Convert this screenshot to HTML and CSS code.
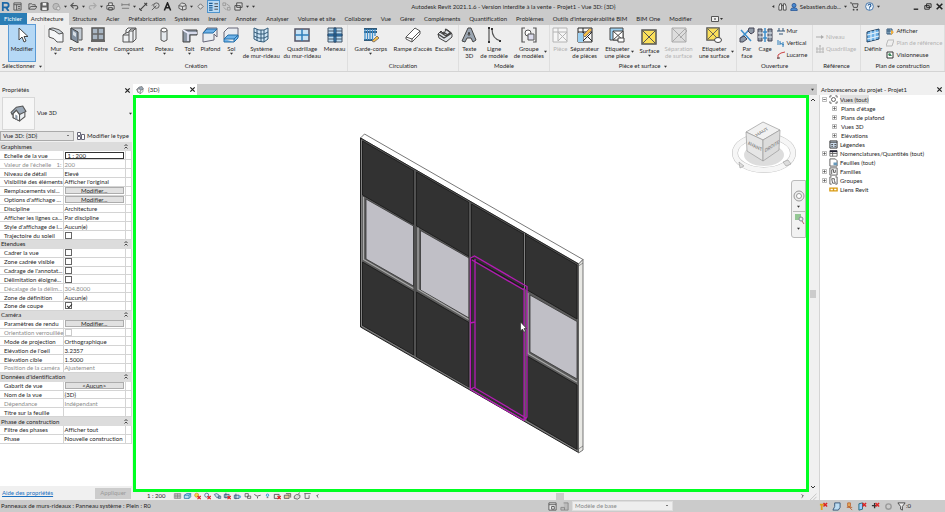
FILE: index.html
```html
<!DOCTYPE html>
<html lang="fr">
<head>
    <meta charset="UTF-8">
    <meta name="viewport" content="width=device-width, initial-scale=1.0">
    <title>Autodesk Revit 2021.1.6</title>
    <link rel="stylesheet" href="styles.css">
</head>
<body>

    <!-- Shared icons -->
    <svg class="sprite" aria-hidden="true">
        <symbol id="i-caret" viewBox="0 0 4 4"><path d="M0 1h4L2 3.5z" fill="#333"/></symbol>
        <symbol id="i-close" viewBox="0 0 8 8"><path d="M1.5 1.5l5 5M6.5 1.5l-5 5" stroke="#222" stroke-width="1.4"/></symbol>
        <symbol id="i-collapse" viewBox="0 0 6 6"><path d="M1.5 3L3 1.5 4.5 3M1.5 5.5L3 4l1.5 1.5" fill="none" stroke="#333" stroke-width=".9"/></symbol>
        <symbol id="i-cursor" viewBox="0 0 16 16"><path d="M5 1v12l3-3 2 5 2-1-2-4.500h4z" fill="#fff" stroke="#444"/></symbol>
        <symbol id="i-house" viewBox="0 0 16 16"><path d="M3 7v5l6 3 5-4V6z" fill="#eef2f6" stroke="#555"/><path d="M1 7l5-5 6-1 3 5-6 3-3-4-4 4z" fill="#9aa7b5" stroke="#555"/><path d="M6 5l3 4v6l-6-3V8z" fill="#fff" stroke="#555"/><path d="M5 9v4l2 1v-4z" fill="#8b97a5"/></symbol>
        <symbol id="i-room" viewBox="0 0 16 16"><path d="M1 1h14v14H1z" fill="#f6f6f6" stroke="currentColor"/><path d="M6 1v4H1M6 5v9M6 5h9M6 5l9 9M15 5l-9 9" fill="none" stroke="currentColor"/></symbol>
        <symbol id="i-area" viewBox="0 0 16 16"><path d="M1 1h14v14H1z" fill="#fbe05a" stroke="#555" stroke-width="1.5"/><path d="M2 2l12 12M14 2L2 14" stroke="#555"/></symbol>
        <symbol id="i-plus" viewBox="0 0 6 6"><path d="M.5.5h5v5h-5z" fill="#fff" stroke="#aaa"/><path d="M1.500 3h3M3 1.500v3" stroke="#555"/></symbol>
        <symbol id="i-minus" viewBox="0 0 6 6"><path d="M.5.5h5v5h-5z" fill="#fff" stroke="#aaa"/><path d="M1.500 3h3" stroke="#555"/></symbol>
        <symbol id="i-redx" viewBox="0 0 10 10"><path d="M5 5l4 4M9 5l-4 4" stroke="#d22" stroke-width="1.5"/></symbol>
    </svg>

    <div class="app">

        <!-- Title bar -->
        <header class="title-bar">
            <div class="quick-access">
                <button class="qa" aria-label="Revit"><svg viewBox="0 0 10 10"><path d="M2 10V1h4a2.500 2.500 0 0 1 0 5H3M5.500 6L8.500 10" fill="none" stroke="#1c68a8" stroke-width="2"/></svg></button>
                <button class="qa" aria-label="Accueil"><svg viewBox="0 0 10 10"><path d="M1 1h8v8H1zM1 3h8M4 3v6M5.500 5H8M5.500 7H8" fill="none" stroke="#555"/></svg></button>
                <button class="qa qa-group" aria-label="Ouvrir"><svg viewBox="0 0 10 10"><path d="M1 8V2h3l1 1h3v2M1 8l2-3h7L8 8z" fill="none" stroke="#555"/></svg></button>
                <button class="qa" aria-label="Enregistrer"><svg viewBox="0 0 10 10"><path d="M1 1h8v8H1z" fill="#666" stroke="#444"/><path d="M3 1h4v3H3zM2.500 6h5v3h-5z" fill="#eee"/></svg></button>
                <button class="qa" aria-label="Synchroniser"><svg viewBox="0 0 10 10"><circle cx="4.500" cy="5" r="3.500" fill="#bbb" stroke="#999"/><circle cx="7" cy="7" r="2" fill="#ddd" stroke="#999"/></svg></button>
                <svg class="caret"><use href="#i-caret"/></svg>
                <button class="qa" aria-label="Annuler"><svg viewBox="0 0 10 10"><path d="M4 1L1 4l3 3M1 4h5a2 2 0 0 1 1 4H6" fill="none" stroke="#555" stroke-width="1.300"/></svg></button>
                <svg class="caret"><use href="#i-caret"/></svg>
                <button class="qa" aria-label="Rétablir"><svg viewBox="0 0 10 10"><path d="M6 1l3 3-3 3M9 4H4a2 2 0 0 0-1 4h1" fill="none" stroke="#aaa" stroke-width="1.300"/></svg></button>
                <svg class="caret"><use href="#i-caret"/></svg>
                <button class="qa" aria-label="Imprimer"><svg viewBox="0 0 10 10"><path d="M1 4h8v4H1zM3 4V1h4v3M3 6h4v3H3z" fill="#eee" stroke="#444"/></svg></button>
                <button class="qa qa-group" aria-label="Mesurer"><svg viewBox="0 0 10 10"><path d="M1 3h8M1 7h8M1 1.500v3M9 1.500v3" stroke="#777" fill="none"/></svg></button>
                <svg class="caret"><use href="#i-caret"/></svg>
                <button class="qa" aria-label="Cote"><svg viewBox="0 0 10 10"><path d="M1 9l8-8M0 7l3 3M6 1l3 3" stroke="#444" stroke-width="1.300"/></svg></button>
                <button class="qa" aria-label="Étiquette"><svg viewBox="0 0 10 10"><circle cx="6" cy="4" r="3" fill="none" stroke="#555"/><path d="M1 9l5-5M1 4l2-2" stroke="#555"/></svg></button>
                <button class="qa" aria-label="Texte"><svg viewBox="0 0 10 10"><path d="M1.500 9.500L5 1l3.500 8.500M3 6.500h4" fill="none" stroke="#222" stroke-width="1.700"/></svg></button>
                <button class="qa qa-group" aria-label="Vue 3D"><svg viewBox="0 0 10 10"><path d="M1 4l3-3 4 1 1 2v4l-4 1-4-2zM1 4l4 1 4-1M5 5v4" fill="#ddd" stroke="#555"/></svg></button>
                <svg class="caret"><use href="#i-caret"/></svg>
                <button class="qa" aria-label="Coupe"><svg viewBox="0 0 10 10"><path d="M2 5l3-3 3 3-3 3z" fill="#ddd" stroke="#666"/></svg></button>
                <button class="qa qa-on" aria-label="Lignes fines"><svg viewBox="0 0 10 10"><path d="M0 1.500h4M0 4h4M0 6.500h4M0 9h4" stroke="#1c5d95" stroke-width="1.500"/><path d="M6 2h4M6 5h4M6 8h4" stroke="#444"/></svg></button>
                <button class="qa" aria-label="Fermer les vues"><svg viewBox="0 0 10 10"><path d="M1 1h3v3H1zM6 6h3v3H6zM5 2l4 3M2 6l3 3" fill="none" stroke="#999"/></svg></button>
                <button class="qa" aria-label="Changer de fenêtre"><svg viewBox="0 0 10 10"><path d="M3 1h6v5H3zM1 4h6v5H1z" fill="#ddd" stroke="#444"/></svg></button>
                <svg class="caret"><use href="#i-caret"/></svg>
                <svg class="caret"><use href="#i-caret"/></svg>
            </div>
            <h1 class="app-title">Autodesk Revit 2021.1.6 - Version interdite à la vente - Projet1 - Vue 3D: {3D}</h1>
            <div class="account">
                <svg class="caret" viewBox="0 0 4 4"><path d="M3 0v4L0 2z" fill="#333"/></svg>
                <button class="qa" aria-label="Rechercher"><svg viewBox="0 0 10 10"><path d="M1 9V5l1-3h2v7zM6 9V2h2l1 3v4zM4 4h2" fill="#eee" stroke="#444"/></svg></button>
                <button class="user"><svg viewBox="0 0 10 10"><circle cx="5" cy="3" r="2.500" fill="#4a8ad0" stroke="#1f4f92"/><path d="M1 9.500V8q0-2 4-2t4 2v1.500z" fill="#4a8ad0" stroke="#1f4f92"/></svg>Sebastien.dub...</button>
                <svg class="caret"><use href="#i-caret"/></svg>
                <button class="qa" aria-label="Panier"><svg viewBox="0 0 10 10"><path d="M0 1h2l2 5h4l1-4H3" fill="none" stroke="#444"/><circle cx="4" cy="8.500" r="1" fill="#444"/><circle cx="8" cy="8.500" r="1" fill="#444"/></svg></button>
                <button class="qa qa-group" aria-label="Aide"><svg viewBox="0 0 10 10"><circle cx="5" cy="5" r="4.300" fill="#eef5fc" stroke="#3b6ea5"/><path d="M3.500 4a1.500 1.500 0 1 1 2 1.300L5 6.500M5 7.200v1" fill="none" stroke="#235a96" stroke-width="1.200"/></svg></button>
                <svg class="caret"><use href="#i-caret"/></svg>
                <div class="window-buttons">
                    <button class="qa" aria-label="Réduire"><svg viewBox="0 0 10 10"><path d="M3 8h5" stroke="#222" stroke-width="1.500"/></svg></button>
                    <button class="qa" aria-label="Restaurer"><svg viewBox="0 0 10 10"><path d="M4 2h5v4H4zM2 4h5v4H2z" fill="#ccc" stroke="#222"/></svg></button>
                    <button class="qa" aria-label="Fermer"><svg viewBox="0 0 8 8"><use href="#i-close"/></svg></button>
                </div>
            </div>
        </header>

        <!-- Ribbon tabs -->
        <nav class="tabs">
            <button class="tab tab-file">Fichier</button>
            <button class="tab tab-active">Architecture</button>
            <button class="tab">Structure</button>
            <button class="tab">Acier</button>
            <button class="tab">Préfabrication</button>
            <button class="tab">Systèmes</button>
            <button class="tab">Insérer</button>
            <button class="tab">Annoter</button>
            <button class="tab">Analyser</button>
            <button class="tab">Volume et site</button>
            <button class="tab">Collaborer</button>
            <button class="tab">Vue</button>
            <button class="tab">Gérer</button>
            <button class="tab">Compléments</button>
            <button class="tab">Quantification</button>
            <button class="tab">Problèmes</button>
            <button class="tab">Outils d'interopérabilité BIM</button>
            <button class="tab">BIM One</button>
            <button class="tab">Modifier</button>
            <button class="tab tab-toggle" aria-label="Réduire le ruban"><svg viewBox="0 0 12 6"><path d="M.5.500h7v5h-7z" fill="#eee" stroke="#555"/><path d="M3 3h2" stroke="#333"/><path d="M9 2h3l-1.500 2z" fill="#333"/></svg></button>
        </nav>

        <!-- Ribbon -->
        <div class="ribbon">
            <section class="group">
                <div class="tools tools-select">
                    <button class="tool tool-on"><svg><use href="#i-cursor"/></svg>Modifier</button>
                </div>
                <h2>Sélectionner <svg class="caret"><use href="#i-caret"/></svg></h2>
            </section>
            <section class="group">
                <div class="tools tools-build">
                    <button class="tool"><svg viewBox="0 0 16 16"><path d="M1 2q8 0 14 4v9q-6 0-6 0Q7 11 1 10z" fill="#f4f6f8" stroke="#555"/><path d="M1 2q2-1 4-1 7 1 10 5l-4 1Q7 3 1 2z" fill="#cdd5dc" stroke="#555"/></svg>Mur<svg class="caret"><use href="#i-caret"/></svg></button>
                    <button class="tool"><svg viewBox="0 0 16 16"><path d="M3 13V1h11v12h-3" fill="#c4ccd4" stroke="#555"/><path d="M3 1l7 4v11l-7-4z" fill="#8492a2" stroke="#444"/><path d="M5 4l3 2v4L5 8z" fill="#d8dfe6"/></svg>Porte</button>
                    <button class="tool"><svg viewBox="0 0 16 16"><path d="M2 1h12v12H2z" fill="#a9b6c3" stroke="#555" stroke-width="1.500"/><path d="M8 1v12M2 7h12" stroke="#666" stroke-width="1.500"/><path d="M1 14h14" stroke="#666" stroke-width="2"/></svg>Fenêtre</button>
                    <button class="tool"><svg viewBox="0 0 16 16"><path d="M2 8l3-2V3l2-2h8v11l-3 3H2z" fill="#eef0f2" stroke="#555"/><path d="M2 8h6V4h4v11M8 4l2-2h5M12 4l3-3M8 8v7M5 6l3-1" fill="none" stroke="#555"/></svg>Composant<svg class="caret"><use href="#i-caret"/></svg></button>
                    <button class="tool"><svg viewBox="0 0 16 16"><path d="M5 3v10q3 3 6 0V3z" fill="#e5e9ed" stroke="#555"/><ellipse cx="8" cy="3" rx="3" ry="2" fill="#fff" stroke="#555"/></svg>Poteau<svg class="caret"><use href="#i-caret"/></svg></button>
                    <button class="tool"><svg viewBox="0 0 16 16"><path d="M1 3h14v5H8v7H1z" fill="#8e99a6" stroke="#444"/><path d="M1 3l5 3h9M6 6v8" fill="none" stroke="#eef" stroke-width="1.500"/></svg>Toit<svg class="caret"><use href="#i-caret"/></svg></button>
                    <button class="tool"><svg viewBox="0 0 16 16"><path d="M1 6l4-5h10v9l-3-3v6l-11 2z" fill="#e9edf1" stroke="#667"/><path d="M1 6l4-4h10l-4 4z" fill="#6db2e8" stroke="#256fa8"/></svg>Plafond</button>
                    <button class="tool"><svg viewBox="0 0 16 16"><path d="M1 12V5l4-4h10v9" fill="#e9edf1" stroke="#667"/><path d="M1 12l4-4h10l-4 4zM1 12v3h10v-3l4-4v3l-4 4" fill="#6db2e8" stroke="#256fa8"/></svg>Sol<svg class="caret"><use href="#i-caret"/></svg></button>
                    <button class="tool"><svg viewBox="0 0 16 16"><path d="M1 1q5 3 10 2l4-2v11l-4 3Q5 15 1 12z" fill="#cfe6f6" stroke="#335a78"/><path d="M1 5q5 3 10 2l4-2M1 9q5 3 10 2l4-2M4 2v12M8 3v12M11 3v12" fill="none" stroke="#335a78"/></svg>Système<br>de mur-rideau</button>
                    <button class="tool"><svg viewBox="0 0 16 16"><path d="M1 2h14v12H1z" fill="#c8e3f5" stroke="#556" stroke-width="1.500"/><path d="M8 2v12M1 8h14" stroke="#2f7fbb" stroke-width="1.500"/></svg>Quadrillage<br>du mur-rideau</button>
                    <button class="tool"><svg viewBox="0 0 16 16"><path d="M1 1h14v14H1z" fill="#b9dcf3" stroke="#456"/><path d="M8 1v14M1 8h14M1 4h14M1 12h14" stroke="#456"/><path d="M7 1h2v14H7zM1 7h14v2H1z" fill="#3c8fcd" stroke="#246"/></svg>Meneau</button>
                </div>
                <h2>Création</h2>
            </section>
            <section class="group">
                <div class="tools tools-circulation">
                    <button class="tool"><svg viewBox="0 0 16 16"><path d="M1 2h13M1 5h13M1 13h10" stroke="#335a78" stroke-width="2"/><path d="M2 2v11M4.500 2v11M7 2v11M9.500 2v11M12 2v7" stroke="#3c8fcd" stroke-width="1.300"/><path d="M9 14l5-5 2 2-5 4z" fill="#f5c04a" stroke="#876"/></svg>Garde-corps<svg class="caret"><use href="#i-caret"/></svg></button>
                    <button class="tool"><svg viewBox="0 0 16 16"><path d="M1 10l9-9 5 3v3l-8 8-6-3z" fill="#fff" stroke="#555"/><path d="M1 10l6 2 8-8M7 12v3" fill="none" stroke="#555"/></svg>Rampe d'accès</button>
                    <button class="tool"><svg viewBox="0 0 16 16"><path d="M1 7l3-3 3 3 2-5 3 2 3 3v3l-6 5-7-4z" fill="#dfe3e7" stroke="#444"/><path d="M1 7l6 4 8-5M3 5l6 4 5-4M6 5l5 3M8 2l5 3" fill="none" stroke="#444" stroke-width="1.300"/></svg>Escalier</button>
                </div>
                <h2>Circulation</h2>
            </section>
            <section class="group">
                <div class="tools tools-model">
                    <button class="tool"><svg viewBox="0 0 16 16"><path d="M1 14L7 1h3l5 12-3 2-2-4H6l-2 4zM7 8h2L8 5z" fill="#9aa5b1" stroke="#444"/></svg>Texte<br>3D</button>
                    <button class="tool"><svg viewBox="0 0 16 16"><path d="M3 1v14M6 2q0 10 9 12" fill="none" stroke="#555" stroke-width="1.200"/><path d="M2 1h2M2 15h2M5 2h2M14 15v-2" stroke="#333" stroke-width="2"/></svg>Ligne<br>de modèle</button>
                    <button class="tool tool-menu"><svg viewBox="0 0 16 16"><path d="M4 1H1v14h3M12 1h3v14h-3" fill="none" stroke="#555" stroke-width="1.200"/><circle cx="7" cy="6" r="3" fill="#fff" stroke="#555"/><path d="M7 7h6v6H7z" fill="#dde" stroke="#555"/></svg>Groupe<br>de modèles<svg class="caret"><use href="#i-caret"/></svg></button>
                </div>
                <h2>Modèle</h2>
            </section>
            <section class="group">
                <div class="tools tools-room">
                    <button class="tool" disabled><svg><use href="#i-room"/></svg>Pièce</button>
                    <button class="tool"><svg viewBox="0 0 16 16"><use href="#i-room"/><path d="M1 6h5v9H1z" fill="#9bd0f2"/><path d="M6 8l7-7 2 2-7 7z" fill="#f5c04a" stroke="#876"/></svg>Séparateur<br>de pièces</button>
                    <button class="tool tool-menu"><svg viewBox="0 0 16 16"><path d="M1 1h13v12H1z" fill="#9bd0f2" stroke="#444"/><path d="M4 4h10v9H4zM4 4l10 9M14 4L4 13" fill="#fff" stroke="#444"/><path d="M9 11h6v4H9z" fill="#fff" stroke="#444"/></svg>Etiqueter<br>une pièce<svg class="caret"><use href="#i-caret"/></svg></button>
                    <button class="tool tool-low"><svg><use href="#i-area"/></svg>Surface<svg class="caret"><use href="#i-caret"/></svg></button>
                    <button class="tool" disabled><svg viewBox="0 0 16 16"><path d="M1 1h14v14H1zM1 1l14 14M1 15L14 2M7 9l7-7 2 2-7 7" fill="#ddd" stroke="#aaa"/></svg>Séparation<br>de surface</button>
                    <button class="tool tool-menu"><svg viewBox="0 0 16 16"><use href="#i-area" width="14" height="14"/><ellipse cx="12" cy="13" rx="3.500" ry="2.500" fill="#fff" stroke="#444"/></svg>Etiqueter<br>une surface<svg class="caret"><use href="#i-caret"/></svg></button>
                </div>
                <h2>Pièce et surface <svg class="caret"><use href="#i-caret"/></svg></h2>
            </section>
            <section class="group">
                <div class="tools tools-opening">
                    <button class="tool"><svg viewBox="0 0 16 16"><path d="M2 3l10 11M2 11l9-9" stroke="#3c8fcd" stroke-width="1.500"/><path d="M10 1h5v4l-3 2-3-3zM1 11l4-2 3 3-4 3H1z" fill="#8e99a6" stroke="#445"/></svg>Par<br>face</button>
                    <button class="tool"><svg viewBox="0 0 16 16"><path d="M1 2h4v12H1zM11 2h4v12h-4z" fill="#8e99a6" stroke="#445"/><path d="M1 6h14M1 10h14" stroke="#e8eef4"/><path d="M8 1v14M6 5h4M6 11h4" stroke="#3c8fcd" stroke-width="1.500"/></svg>Cage</button>
                    <div class="small-tools">
                        <button><svg viewBox="0 0 8 8"><path d="M0 4h8M2 1v3M6 1v3M2 7h4" stroke="#357" fill="none"/></svg>Mur</button>
                        <button><svg viewBox="0 0 8 8"><path d="M1 1v5M3 2v4M6 3v5M3 4l4 2" stroke="#2f7fbb" fill="none"/></svg>Vertical</button>
                        <button><svg viewBox="0 0 8 8"><path d="M1 8V4l3-2 4-1" stroke="#c44" fill="none"/><path d="M0 7h3" stroke="#444"/></svg>Lucarne</button>
                    </div>
                </div>
                <h2>Ouverture</h2>
            </section>
            <section class="group">
                <div class="tools">
                    <div class="small-tools">
                        <button disabled><svg viewBox="0 0 8 8"><path d="M0 4h6" stroke="#aaa"/><path d="M5 2l3 2-3 2z" fill="#aaa"/></svg>Niveau</button>
                        <button disabled><svg viewBox="0 0 8 8"><path d="M1 2v6M4 2v6M7 2v6M0 4h8M0 7h8" stroke="#bbb"/><circle cx="4" cy="1" r="1" fill="#bbb"/></svg>Quadrillage</button>
                    </div>
                </div>
                <h2>Référence</h2>
            </section>
            <section class="group">
                <div class="tools tools-plane">
                    <button class="tool"><svg viewBox="0 0 16 16"><path d="M2 5l12-3v10L2 15z" fill="#6db2e8" stroke="#246"/><path d="M6 4v10M10 3v10M2 8l12-3M2 12l12-3" stroke="#e8f4fc"/></svg>Définir</button>
                    <div class="small-tools">
                        <button><svg viewBox="0 0 8 8"><path d="M1 2h5v5H1zM3 2v5M1 4h5" stroke="#357" fill="#bde"/><path d="M5 3l3 2-3 3z" fill="#f5b03a"/></svg>Afficher</button>
                        <button disabled><svg viewBox="0 0 8 8"><path d="M2 1h6L6 7H0z" fill="#eee" stroke="#bbb"/></svg>Plan de référence</button>
                        <button><svg viewBox="0 0 8 8"><path d="M1 1h6v6H1z" fill="#fff" stroke="#333"/><path d="M2 3l2-1 2 3H3z" fill="#3a8a5a"/></svg>Visionneuse</button>
                    </div>
                </div>
                <h2>Plan de construction</h2>
            </section>
        </div>

        <main class="workspace">

            <!-- Properties palette -->
            <aside class="properties">
                <div class="palette-title"><h2>Propriétés</h2><button aria-label="Fermer les propriétés"><svg><use href="#i-close"/></svg></button></div>
                <div class="type-selector">
                    <div class="type-thumb"><svg><use href="#i-house"/></svg></div>
                    <span>Vue 3D</span>
                    <svg class="caret"><use href="#i-caret"/></svg>
                </div>
                <div class="type-row">
                    <select aria-label="Type de vue"><option>Vue 3D: {3D}</option></select>
                    <button class="edit-type"><svg viewBox="0 0 8 8"><path d="M.5.500h3v3h-3zM.5 4.500h3v3h-3zM4.500 2.500h3v5h-3z" fill="#fff" stroke="#667"/></svg>Modifier le type</button>
                </div>
                <div class="table-wrap">
                    <table class="props">
                        <colgroup><col class="col-name"><col><col class="col-end"></colgroup>
                        <tr class="section"><th colspan="3">Graphismes<svg><use href="#i-collapse"/></svg></th></tr>
                        <tr><td><label for="scale">Echelle de la vue</label></td><td><input id="scale" class="field" type="text" value="1 : 200"></td><td></td></tr>
                        <tr class="off"><td class="split"><span>Valeur de l'échelle</span><span>1:</span></td><td>200</td><td></td></tr>
                        <tr><td>Niveau de détail</td><td>Elevé</td><td></td></tr>
                        <tr><td>Visibilité des éléments</td><td>Afficher l'original</td><td></td></tr>
                        <tr><td>Remplacements visi...</td><td><button class="cell-btn">Modifier...</button></td><td></td></tr>
                        <tr><td>Options d'affichage ...</td><td><button class="cell-btn">Modifier...</button></td><td></td></tr>
                        <tr><td>Discipline</td><td>Architecture</td><td></td></tr>
                        <tr><td>Afficher les lignes ca...</td><td>Par discipline</td><td></td></tr>
                        <tr><td>Style d'affichage de l...</td><td>Aucun(e)</td><td></td></tr>
                        <tr><td><label for="sun">Trajectoire du soleil</label></td><td><input id="sun" type="checkbox"></td><td></td></tr>
                        <tr class="section"><th colspan="3">Etendues<svg><use href="#i-collapse"/></svg></th></tr>
                        <tr><td><label for="crop">Cadrer la vue</label></td><td><input id="crop" type="checkbox"></td><td></td></tr>
                        <tr><td><label for="crop-visible">Zone cadrée visible</label></td><td><input id="crop-visible" type="checkbox"></td><td></td></tr>
                        <tr><td><label for="crop-note">Cadrage de l'annotat...</label></td><td><input id="crop-note" type="checkbox"></td><td></td></tr>
                        <tr><td><label for="far-clip">Délimitation éloigné...</label></td><td><input id="far-clip" type="checkbox"></td><td></td></tr>
                        <tr class="off"><td>Décalage de la délim...</td><td>304.8000</td><td></td></tr>
                        <tr><td>Zone de définition</td><td>Aucun(e)</td><td></td></tr>
                        <tr><td><label for="section-box">Zone de coupe</label></td><td><input id="section-box" type="checkbox" checked></td><td></td></tr>
                        <tr class="section"><th colspan="3">Caméra<svg><use href="#i-collapse"/></svg></th></tr>
                        <tr><td>Paramètres de rendu</td><td><button class="cell-btn">Modifier...</button></td><td></td></tr>
                        <tr class="off"><td><label for="locked">Orientation verrouillée</label></td><td><input id="locked" type="checkbox" disabled></td><td></td></tr>
                        <tr><td>Mode de projection</td><td>Orthographique</td><td></td></tr>
                        <tr><td>Elévation de l'oeil</td><td>3.2357</td><td></td></tr>
                        <tr><td>Elévation cible</td><td>1.5000</td><td></td></tr>
                        <tr class="off"><td>Position de la caméra</td><td>Ajustement</td><td></td></tr>
                        <tr class="section"><th colspan="3">Données d'identification<svg><use href="#i-collapse"/></svg></th></tr>
                        <tr><td>Gabarit de vue</td><td><button class="cell-btn">&lt;Aucun&gt;</button></td><td></td></tr>
                        <tr><td>Nom de la vue</td><td>{3D}</td><td></td></tr>
                        <tr class="off"><td>Dépendance</td><td>Indépendant</td><td></td></tr>
                        <tr><td>Titre sur la feuille</td><td></td><td></td></tr>
                        <tr class="section"><th colspan="3">Phase de construction<svg><use href="#i-collapse"/></svg></th></tr>
                        <tr><td>Filtre des phases</td><td>Afficher tout</td><td></td></tr>
                        <tr><td>Phase</td><td>Nouvelle construction</td><td></td></tr>
                    </table>
                </div>
                <div class="props-footer"><a href="#aide">Aide des propriétés</a><button disabled>Appliquer</button></div>
            </aside>

            <!-- 3D view -->
            <section class="view">
                <div class="view-tabs">
                    <div class="view-tab"><svg><use href="#i-house"/></svg><span>{3D}</span><button aria-label="Fermer la vue"><svg><use href="#i-close"/></svg></button></div>
                    <svg class="caret view-menu"><use href="#i-caret"/></svg>
                </div>
                <div class="view-body">
                    <div class="canvas">
                        <svg class="model" viewBox="136 98 670 391" role="img" aria-label="Mur-rideau">
                            <!-- frame: top face, front, end -->
                            <path d="M360.500 138l4-4L583 259.500l-4 4.500z" fill="#fff" stroke="#555" stroke-width=".8"/>
                            <path d="M360.500 138L578.500 264v188.500L360.500 327z" fill="#5c5c5c" stroke="#222"/>
                            <path d="M578.500 264l4.500-4.500V450l-4.500 3z" fill="#e8e8e4" stroke="#555" stroke-width=".8"/>
                            <path d="M578.500 449l4.500-3M578.500 266l4.500-3" stroke="#555" stroke-width=".6"/>
                            <!-- top row of panels -->
                            <g fill="#323232" stroke="#151515" stroke-width=".8">
                                <path d="M362.500 141l51 29.500v54l-51-29.500z"/>
                                <path d="M416.500 172l52.500 30.500v54L416.500 226z"/>
                                <path d="M471.500 204l52 30v54l-52-30z"/>
                                <path d="M525.500 235l51.500 30v54L525.500 289z"/>
                            </g>
                            <!-- bottom row of panels -->
                            <g fill="#323232" stroke="#151515" stroke-width=".8">
                                <path d="M362.500 262l51 29.500v63.500l-51-29.500z"/>
                                <path d="M416.500 292l52.500 30.500v65L416.500 357z"/>
                                <path d="M471.500 258l52 30v131l-52-30z"/>
                                <path d="M527 356l50 29v64.500L527 420z"/>
                            </g>
                            <!-- glazing -->
                            <g fill="#c0bfc6" stroke="#333" stroke-width=".8">
                                <path d="M366 199l47.500 27v60L366 259z"/>
                                <path d="M420.500 230.500l48.500 27.500v60l-48.500-28z"/>
                                <path d="M530 295l47 26.500V379l-47-27z"/>
                            </g>
                            <g fill="none" stroke="#aaa" stroke-width="1.200">
                                <path d="M363.500 197v62.500l50 29"/>
                                <path d="M418 227.500v62l51 30"/>
                                <path d="M528 293v60.500l49 28.500"/>
                            </g>
                            <!-- mullions -->
                            <path d="M415 170v187M470 202v187M524.500 233v56" stroke="#222" stroke-width="2.500"/>
                            <path d="M415 170v187M470 202v187M524.500 233v56" stroke="#999" stroke-width=".8"/>
                            <path d="M361.500 140v186L578 451" fill="none" stroke="#999" stroke-width=".6"/>
                            <!-- selected panel -->
                            <g fill="none" stroke="#b41bb4" stroke-width="1.300">
                                <path d="M470.500 258l4-2 52.500 30.500V417l-3 3.500-53.500-31z"/>
                                <path d="M472 260l52 30M475 259v129l51 30M524 288v132M470 323l5-1M470 389.500l5-2.500"/>
                            </g>
                            <path d="M520.500 322v9l2-2 1.500 3 1.500-.5-1.500-3h2.500z" fill="#fff" stroke="#222" stroke-width=".6"/>
                        </svg>
                        <svg class="view-cube" viewBox="0 0 66 56" role="img" aria-label="ViewCube">
                            <ellipse cx="33" cy="33" rx="29" ry="17" fill="none" stroke="#bbb" stroke-width="6"/>
                            <ellipse cx="33" cy="33" rx="29" ry="17" fill="none" stroke="#f6f6f6" stroke-width="5"/>
                            <ellipse cx="33" cy="35" rx="20" ry="11" fill="#ddd"/>
                            <path d="M15 12L32 2l17 8-17 10z" fill="#f1f1f1" stroke="#999" stroke-width=".7"/>
                            <path d="M15 12l17 8v21L16 31z" fill="#e6e6e6" stroke="#999" stroke-width=".7"/>
                            <path d="M32 20l17-10-1 20-16 11z" fill="#dcdcdc" stroke="#999" stroke-width=".7"/>
                            <g class="cube-text" text-anchor="middle">
                                <text transform="matrix(.85 -.5 .6 .6 32 13)">HAUT</text>
                                <text transform="matrix(.85 .42 0 1 24 28)">AVANT</text>
                                <text transform="matrix(.8 -.5 0 1 41 28)">DROITE</text>
                            </g>
                            <path d="M8 42l5 4-4 2zM52 42l5-2 3 4-5 2z" fill="#ddd" stroke="#999" stroke-width=".6"/>
                        </svg>
                        <div class="nav-bar">
                            <button aria-label="Disque de navigation"><svg viewBox="0 0 12 12"><circle cx="6" cy="6" r="5" fill="#eee" stroke="#999"/><circle cx="6" cy="6" r="2.500" fill="#fff" stroke="#999"/></svg></button>
                            <svg class="caret"><use href="#i-caret"/></svg>
                            <button class="nav-zoom" aria-label="Zoom"><svg viewBox="0 0 12 12"><path d="M2 2h6v6H2z" fill="#94c794"/><circle cx="8" cy="7" r="2" fill="#eee" stroke="#889"/><path d="M9 9l2 3" stroke="#a66"/></svg></button>
                            <svg class="caret"><use href="#i-caret"/></svg>
                        </div>
                    </div>
                    <div class="v-scroll"><svg viewBox="0 0 6 6"><path d="M1 4l2-2 2 2" fill="none" stroke="#333"/></svg><i></i><svg viewBox="0 0 6 6"><path d="M1 2l2 2 2-2" fill="none" stroke="#333"/></svg></div>
                </div>
                <div class="view-bar">
                    <span class="view-scale">1 : 200</span>
                    <button aria-label="Niveau de détail"><svg viewBox="0 0 10 10"><path d="M1 2h8v6H1zM1 4h8M1 6h8M3 2v6M5 2v6M7 2v6" fill="none" stroke="#666" stroke-width=".7"/></svg></button>
                    <button aria-label="Style visuel"><svg viewBox="0 0 10 10"><path d="M1 4l3-2h5v4L7 8H1zM1 4h6v4M7 4l2-2" fill="#bfe0f6" stroke="#27a"/></svg></button>
                    <button aria-label="Soleil"><svg viewBox="0 0 10 10"><circle cx="4" cy="4" r="2.500" fill="#fbd34a" stroke="#c93"/><use href="#i-redx"/></svg></button>
                    <button aria-label="Ombres"><svg viewBox="0 0 10 10"><circle cx="4" cy="4" r="2.500" fill="#eef" stroke="#468"/><use href="#i-redx"/></svg></button>
                    <button aria-label="Rendu"><svg viewBox="0 0 10 10"><path d="M1 3l3-1 3 2v3H4zM6 5h3v3H6z" fill="#cde" stroke="#468"/></svg></button>
                    <button aria-label="Cadrer"><svg viewBox="0 0 10 10"><path d="M1 3h6v4H1zM3 1v7" fill="#cde" stroke="#357"/><use href="#i-redx"/></svg></button>
                    <button aria-label="Zone cadrée"><svg viewBox="0 0 10 10"><path d="M1 4h6v4H1zM3 2v7" fill="#cde" stroke="#357"/><circle cx="8" cy="6" r="1.500" fill="#6ad"/></svg></button>
                    <button aria-label="Verrouiller"><svg viewBox="0 0 10 10"><path d="M2 2h4v4H2zM5 5h4v3H5z" fill="#eee" stroke="#555"/></svg></button>
                    <button aria-label="Masquer"><svg viewBox="0 0 10 10"><path d="M1 3q3 4 8 1M5 6v2" fill="none" stroke="#444"/></svg></button>
                    <button aria-label="Révéler"><svg viewBox="0 0 10 10"><circle cx="5" cy="4" r="1.500" fill="#cef" stroke="#28b"/><path d="M4 7h2" stroke="#555"/></svg></button>
                    <button aria-label="Propriétés temporaires"><svg viewBox="0 0 10 10"><path d="M1 3h6v5H1z" fill="#eee" stroke="#444"/><use href="#i-redx"/></svg></button>
                    <button aria-label="Modèle analytique"><svg viewBox="0 0 10 10"><path d="M1 4h6v4H1zM3 2h6v5" fill="#e9c9a0" stroke="#555"/></svg></button>
                    <button aria-label="Déplacement"><svg viewBox="0 0 10 10"><path d="M1 5l3-2 4 1v3l-3 2-4-1zM6 2l2-1" fill="#ddd" stroke="#555"/></svg></button>
                    <button aria-label="Contraintes"><svg viewBox="0 0 10 10"><path d="M1 2h8M2 2v6h5V4" fill="none" stroke="#555"/></svg></button>
                    <svg viewBox="0 0 10 10"><path d="M6 3L4 5l2 2" fill="none" stroke="#222"/></svg>
                    <div class="h-scroll"><i></i></div>
                    <svg viewBox="0 0 10 10"><path d="M4 3l2 2-2 2" fill="none" stroke="#222"/></svg>
                    <svg viewBox="0 0 10 10"><path d="M2 10l8-8M6 10l4-4" stroke="#bbb"/></svg>
                </div>
            </section>

            <!-- Project browser -->
            <aside class="browser">
                <div class="palette-title"><h2>Arborescence du projet - Projet1</h2><button aria-label="Fermer l'arborescence"><svg><use href="#i-close"/></svg></button></div>
                <ul class="tree">
                    <li><svg class="node"><use href="#i-minus"/></svg><svg class="kind" viewBox="0 0 10 10"><path d="M3 1H1v2M7 1h2v2M3 9H1V7M7 9h2V7" fill="none" stroke="#555"/><circle cx="5" cy="5" r="2.200" fill="#fff" stroke="#555"/></svg><span class="selected">Vues (tout)</span>
                        <ul>
                            <li><svg class="node"><use href="#i-plus"/></svg>Plans d'étage</li>
                            <li><svg class="node"><use href="#i-plus"/></svg>Plans de plafond</li>
                            <li><svg class="node"><use href="#i-plus"/></svg>Vues 3D</li>
                            <li><svg class="node"><use href="#i-plus"/></svg>Elévations</li>
                        </ul>
                    </li>
                    <li><i class="node"></i><svg class="kind" viewBox="0 0 10 10"><path d="M1 1h8v8H1z" fill="#cde" stroke="#333"/><path d="M1 2.500h8M2.500 5h2M2.500 7h2M6 5h2M6 7h2" stroke="#444"/></svg>Légendes</li>
                    <li><svg class="node"><use href="#i-plus"/></svg><svg class="kind" viewBox="0 0 10 10"><path d="M1 2h8v6H1zM1 5h8M4 2v6" fill="#fff" stroke="#666"/><path d="M1 2.500h8" stroke="#223" stroke-width="2"/></svg>Nomenclatures/Quantités (tout)</li>
                    <li><i class="node"></i><svg class="kind" viewBox="0 0 10 10"><path d="M1 1h6l2 2v6H1z" fill="#fff" stroke="#555"/><path d="M5 5h4v3H5z" fill="#69b"/></svg>Feuilles (tout)</li>
                    <li><svg class="node"><use href="#i-plus"/></svg><svg class="kind" viewBox="0 0 10 10"><path d="M1 1h8v8H1zM3 8V3h2v3h2V3" fill="#fff" stroke="#555"/></svg>Familles</li>
                    <li><svg class="node"><use href="#i-plus"/></svg><svg class="kind" viewBox="0 0 10 10"><path d="M3 1H1v8h2M7 1h2v8H7" fill="none" stroke="#555"/><path d="M3 3h3v2l1 3H4z" fill="#fff" stroke="#555"/></svg>Groupes</li>
                    <li><i class="node"></i><svg class="kind" viewBox="0 0 10 10"><path d="M1 3.500h4v3H1zM5 3.500h4v3H5z" fill="#fff" stroke="#d99a10" stroke-width="1.500"/></svg>Liens Revit</li>
                </ul>
            </aside>
        </main>

        <!-- Status bar -->
        <footer class="status">
            <span>Panneaux de murs-rideaux : Panneau système : Plein : R0</span>
            <div class="status-options">
                <button aria-label="Sous-projets"><svg viewBox="0 0 10 10"><path d="M1 1h8v8H1zM1 3h8M4 5h3v3H4z" fill="#eee" stroke="#555"/></svg></button>
                <button aria-label="Variantes"><svg viewBox="0 0 10 10"><path d="M1 6h4v3H1zM4 1h5v8H5" fill="#bbb" stroke="#888"/></svg></button>
                <select aria-label="Variante active"><option>Modèle de base</option></select>
            </div>
            <div class="status-filters">
                <button aria-label="Sélectionner les liens"><svg viewBox="0 0 10 10"><path d="M1 3h5M3 3v6" stroke="#e0a020" stroke-width="2"/><use href="#i-redx" y="-4"/></svg></button>
                <button aria-label="Calques sous-jacents"><svg viewBox="0 0 10 10"><path d="M3 1h6v5L7 9H1l2-4z" fill="#bcdcf2" stroke="#357"/></svg></button>
                <button aria-label="Eléments verrouillés"><svg viewBox="0 0 10 10"><path d="M3 1h3v4H3z" fill="#e8b060" stroke="#b63"/><path d="M4 5l4 4M2 6h6" stroke="#b63"/></svg></button>
                <button aria-label="Sélection par face"><svg viewBox="0 0 10 10"><path d="M1 2l4-1v7l-4 1z" fill="#9cf" stroke="#267"/><use href="#i-redx" y="-4"/></svg></button>
                <button aria-label="Glisser"><svg viewBox="0 0 10 10"><path d="M1 4h6M4 1v6" stroke="#333" stroke-width="1.500"/><use href="#i-redx" y="-4"/></svg></button>
                <button aria-label="Processus"><svg viewBox="0 0 10 10"><circle cx="5" cy="5" r="3" fill="none" stroke="#999" stroke-width="1.500"/></svg></button>
                <button class="filter" aria-label="Filtre"><svg viewBox="0 0 10 10"><path d="M1 1h8L6 5v4L4 8V5z" fill="#eee" stroke="#444"/></svg>:0</button>
            </div>
        </footer>
    </div>

</body>
</html>
```
FILE: styles.css
```css
:root {
    --chrome: #cbcbcb;
    --panel: #f0f0f0;
    --ribbon: #eeeeee;
    --line: #d4d4d4;
    --text: #262626;
    --muted: #8c8c8c;
    --highlight: #00ff21;
}

* {
    box-sizing: border-box;
}

html, body {
    margin: 0;
    height: 100%;
    overflow: hidden;
}

body, button, input, select {
    font-family: Lato, "Open Sans", sans-serif;
    font-size: 6px;
    font-variant-ligatures: none;
    line-height: 8px;
    color: var(--text);
}

button {
    padding: 0;
    border: 0;
    background: none;
}

h1, h2 {
    margin: 0;
    font-size: inherit;
    font-weight: normal;
}

svg {
    display: block;
    flex: none;
}

.sprite {
    position: absolute;
    width: 0;
    height: 0;
}

.caret {
    width: 3px;
    height: 3px;
}

.app {
    display: flex;
    flex-direction: column;
    height: 100vh;
    background: var(--panel);
}

/* Title bar */
.title-bar {
    display: flex;
    align-items: center;
    height: 13px;
    background: var(--chrome);
}

.quick-access, .account, .window-buttons {
    display: flex;
    align-items: center;
    gap: 3px;
}

.quick-access {
    padding-left: 1px;
}

.app-title {
    flex: 1;
    text-align: center;
    white-space: nowrap;
}

.qa svg {
    width: 9px;
    height: 9px;
}

.qa-group {
    margin-left: 3px;
}

.qa-on {
    padding: 1px;
    background: #b9d9f3;
    outline: 1px solid #4f94cd;
}

.user {
    display: flex;
    gap: 2px;
}

.user svg {
    width: 8px;
    height: 8px;
}

.window-buttons {
    margin-left: 28px;
    padding-right: 1px;
}

/* Tabs */
.tabs {
    display: flex;
    height: 12px;
    background: var(--chrome);
}

.tab {
    padding: 0 5px 0 4px;
    white-space: nowrap;
}

.tab-file {
    color: #fff;
    background: #2a7db5;
}

.tab-active {
    background: var(--ribbon);
}

.tab-toggle {
    margin-left: 10px;
}

.tab-toggle svg {
    width: 12px;
    height: 6px;
}

/* Ribbon */
.ribbon {
    display: grid;
    grid-template-columns: 45fr 303fr 111fr 91fr 187fr 76fr 48fr 84fr;
    height: 47px;
    border-bottom: 1px solid var(--line);
    background: var(--ribbon);
}

.group {
    display: flex;
    flex-direction: column;
    min-width: 0;
    border-right: 1px solid #dedede;
}

.group h2 {
    display: flex;
    justify-content: center;
    align-items: center;
    gap: 4px;
    height: 10px;
}

.tools {
    display: grid;
    flex: 1;
    padding: 0 1px;
    white-space: nowrap;
}

.tools-select {
    grid-template-columns: 26px;
    justify-content: center;
}

.tools-build {
    grid-template-columns: 20fr 21fr 22fr 40fr 31fr 20fr 22fr 20fr 40fr 42fr 23fr;
}

.tools-circulation {
    grid-template-columns: 44fr 41fr 24fr;
}

.tools-model {
    grid-template-columns: 19fr 31fr 39fr;
}

.tools-room {
    grid-template-columns: 19fr 30fr 36fr 29fr 30fr 42fr;
}

.tools-opening {
    grid-template-columns: 18fr 19fr 37fr;
}

.tools-plane {
    grid-template-columns: 23fr 60fr;
}

.tool {
    position: relative;
    display: flex;
    flex-direction: column;
    align-items: center;
    min-width: 0;
    padding-top: 2px;
    line-height: 7px;
}

.tool > svg:first-child {
    width: 16px;
    height: 16px;
    margin-bottom: 2px;
}

.tool:disabled, .small-tools button:disabled {
    color: #b4b4b4;
}

.tool-on {
    background: #b5d8f5;
    outline: 1px solid #5b9bd5;
}

.tool-low {
    padding-top: 4px;
}

.tool-menu .caret {
    position: absolute;
    right: 1px;
    bottom: 8px;
}

.small-tools {
    display: flex;
    flex-direction: column;
    justify-content: center;
    gap: 4px;
    padding-left: 2px;
}

.small-tools button {
    display: flex;
    gap: 2px;
}

.small-tools svg {
    width: 8px;
    height: 8px;
}

/* Workspace */
.workspace {
    display: grid;
    grid-template-columns: 133px 1fr 128px;
    grid-template-rows: minmax(0, 1fr);
    flex: 1;
    min-height: 0;
    padding-top: 12px;
}

.palette-title {
    display: flex;
    justify-content: space-between;
    align-items: center;
    height: 12px;
    padding: 0 2px;
}

.palette-title svg, .view-tab button svg {
    width: 7px;
    height: 7px;
}

/* Properties */
.properties {
    display: flex;
    flex-direction: column;
    min-height: 0;
}

.type-selector {
    display: flex;
    align-items: center;
    height: 34px;
    padding: 0 1px 0 2px;
}

.type-thumb {
    margin-right: 2px;
    padding: 7px;
    border: 1px solid #d8d8d8;
    background: #f6f6f6;
}

.type-thumb svg {
    width: 17px;
    height: 17px;
}

.type-selector .caret {
    margin-left: auto;
}

.type-row {
    display: flex;
    align-items: center;
    gap: 3px;
    height: 12px;
}

select {
    appearance: none;
    width: 74px;
    height: 10px;
    padding: 0 2px;
    border: 1px solid #aaa;
    border-radius: 0;
    background-color: #e4e4e4;
    background-image:
        linear-gradient(45deg, transparent 50%, #777 50%),
        linear-gradient(135deg, #777 50%, transparent 50%);
    background-position: right 5px center, right 3px center;
    background-size: 2px 2px;
    background-repeat: no-repeat;
}

.edit-type {
    display: flex;
    gap: 2px;
    white-space: nowrap;
}

.edit-type svg {
    width: 8px;
    height: 8px;
}

.table-wrap {
    flex: 1;
    min-height: 0;
    margin-right: 1px;
    background: #fff;
}

.props {
    width: 100%;
    height: 302px;
    table-layout: fixed;
    border-collapse: collapse;
}

.col-name {
    width: 63px;
}

.col-end {
    width: 6px;
}

.props td, .props th {
    height: 8px;
    padding: 0 1px;
    border: 0 solid var(--line);
    border-width: 0 1px 1px 0;
    line-height: 7px;
    text-align: left;
    font-weight: normal;
    white-space: nowrap;
}

.props td:first-child {
    padding-left: 4px;
}

.props .section th {
    border-color: #dcdcdc;
    background: #dcdcdc;
}

.section svg {
    float: right;
    width: 6px;
    height: 6px;
    margin-right: 1px;
}

.props .off td {
    color: var(--muted);
}

.split span + span {
    float: right;
}

.field, .cell-btn {
    display: block;
    width: 100%;
    height: 7px;
    line-height: 5px;
}

.field {
    padding: 0 2px;
    border: 1px solid #333;
}

.cell-btn {
    border: 1px solid #adadad;
    background: #e1e1e1;
}

input[type="checkbox"] {
    appearance: none;
    display: block;
    width: 7px;
    height: 7px;
    margin: 0;
    border: 1px solid #666;
    background: #fff;
}

input[type="checkbox"]:disabled {
    border-color: #ccc;
}

input[type="checkbox"]:checked::before {
    content: "";
    display: block;
    width: 4px;
    height: 2px;
    margin: 1px 0 0 1px;
    border: solid #333;
    border-width: 0 0 1px 1px;
    transform: rotate(-45deg);
}

.props-footer {
    display: flex;
    justify-content: space-between;
    align-items: center;
    height: 14px;
    padding: 0 2px;
    background: var(--panel);
}

.props-footer a {
    color: #1a6fc0;
}

.props-footer button {
    height: 11px;
    padding: 0 5px;
    color: #999;
    background: #ccc;
}

/* View */
.view {
    display: flex;
    flex-direction: column;
    min-width: 0;
    min-height: 0;
}

.view-tabs {
    display: flex;
    flex: none;
    justify-content: space-between;
    align-items: center;
    height: 11px;
    background: var(--chrome);
}

.view-tab {
    display: flex;
    align-items: center;
    gap: 4px;
    width: 64px;
    height: 11px;
    padding: 0 1px 0 3px;
    background: #fff;
}

.view-tab > svg {
    width: 8px;
    height: 8px;
}

.view-tab button {
    margin-left: auto;
}

.view-menu {
    margin-right: 3px;
}

.view-body {
    display: flex;
    flex: 1;
    min-height: 0;
}

.canvas {
    position: relative;
    flex: 1;
    min-width: 0;
    border: 3px solid var(--highlight);
    background: #fff;
}

.model {
    width: 100%;
    height: 100%;
}

.view-cube {
    position: absolute;
    top: 22px;
    right: 9px;
    width: 66px;
    height: 56px;
}

.cube-text {
    font-size: 5px;
    font-weight: bold;
    fill: #888;
}

.nav-bar {
    position: absolute;
    top: 82px;
    right: 0;
    display: flex;
    flex-direction: column;
    align-items: center;
    gap: 3px;
    width: 15px;
    height: 58px;
    padding-top: 9px;
    border: 1px solid #bbb;
    border-radius: 3px 0 0 3px;
    background: #f2f2f2;
}

.nav-bar button svg {
    width: 12px;
    height: 12px;
}

.nav-zoom {
    border-top: 1px solid #bbb;
}

.v-scroll {
    display: flex;
    flex-direction: column;
    justify-content: space-between;
    align-items: center;
    width: 8px;
    padding: 2px 0;
}

.v-scroll svg {
    width: 6px;
    height: 6px;
}

.v-scroll i {
    width: 6px;
    height: 8px;
    background: #ccc;
}

.view-bar {
    display: flex;
    flex: none;
    align-items: center;
    gap: 1px;
    height: 8px;
    padding-left: 14px;
}

.view-bar svg {
    width: 9px;
    height: 8px;
}

.view-scale {
    margin-right: 6px;
}

.h-scroll {
    flex: 1;
    display: flex;
    justify-content: center;
}

.h-scroll i {
    width: 8px;
    height: 7px;
    background: #ccc;
}

/* Project browser */
.browser {
    display: flex;
    flex-direction: column;
    min-height: 0;
    margin-left: 2px;
}

.browser .palette-title {
    height: 11px;
}

.tree {
    flex: 1;
    border-left: 1px solid var(--line);
    background: #fff;
}

.tree, .tree ul {
    margin: 0;
    padding-left: 2px;
    list-style: none;
}

.tree li {
    display: flex;
    flex-wrap: wrap;
    align-items: center;
    gap: 0 2px;
    line-height: 9px;
}

.tree ul {
    width: 100%;
    padding-left: 10px;
}

.tree ul li {
    gap: 0 4px;
}

.node {
    width: 5px;
    height: 5px;
}

.kind {
    width: 9px;
    height: 9px;
}

.selected {
    background: #e0e0e0;
}

/* Status bar */
.status {
    display: grid;
    grid-template-columns: 547px 1fr auto;
    align-items: center;
    height: 12px;
    padding: 0 34px 0 1px;
    background: var(--chrome);
}

.status-options, .status-filters {
    display: flex;
    align-items: center;
    gap: 3px;
}

.status-filters {
    gap: 4px;
}

.status svg {
    width: 9px;
    height: 9px;
}

.status select {
    width: 101px;
    color: #888;
    border-color: #ddd;
    background-color: #eee;
}

.filter {
    display: flex;
}
```
